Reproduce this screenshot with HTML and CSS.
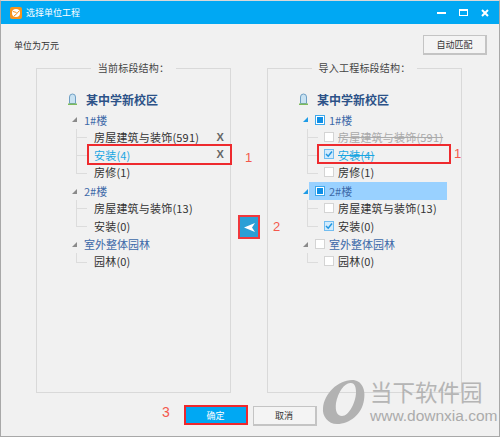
FILE: index.html
```html
<!DOCTYPE html>
<html lang="zh-CN">
<head>
    <meta charset="UTF-8">
    <title>选择单位工程</title>
    <link rel="stylesheet" href="styles.css">
</head>
<body>

<div class="window">
    <header class="titlebar">
        <svg class="logo" viewBox="0 0 12 12" width="12" height="12">
            <rect width="12" height="12" rx="2" fill="#f7941d"/>
            <circle cx="6" cy="6" r="4" fill="#fff"/>
            <path d="M3 4.5L6.5 5.5M9 4L6 7.5M4 9L6.5 7" fill="none" stroke="#f7941d" stroke-width="1"/>
        </svg>
        <span class="title">选择单位工程</span>
        <div class="controls">
            <svg width="9" height="2" viewBox="0 0 9 2"><rect width="9" height="2" fill="#fff"/></svg>
            <svg width="9" height="7" viewBox="0 0 9 7"><path d="M0 0H9V7H0Z M1 2V6H8V2Z" fill="#fff" fill-rule="evenodd"/></svg>
            <svg width="8" height="8" viewBox="0 0 8 8"><path d="M1 1L7 7M7 1L1 7" stroke="#fff" stroke-width="2"/></svg>
        </div>
    </header>

    <div class="toolbar">
        <span class="unit">单位为万元</span>
        <button class="btn">自动匹配</button>
    </div>

    <div class="panels">
        <fieldset class="panel">
            <legend>当前标段结构：</legend>
            <div class="tree tree-left">
                <div class="root">
                    <svg class="root-icon" viewBox="0 0 11 12" width="11" height="12">
                        <path d="M2.5 10.5V4A3 3 0 0 1 8.5 4V10.5Z" fill="#c9e2f2" stroke="#6f9fc4"/>
                        <rect x="1" y="10.5" width="9" height="1.5" fill="#7dbb5c"/>
                    </svg>
                    <span>某中学新校区</span>
                </div>
                <ul class="groups">
                    <li>
                        <div class="group"><i class="arrow"></i><span>1#楼</span></div>
                        <ul class="items">
                            <li><span>房屋建筑与装饰(591)</span><b class="del">X</b></li>
                            <li class="current"><span>安装(4)</span><b class="del">X</b></li>
                            <li><span>房修(1)</span></li>
                        </ul>
                    </li>
                    <li>
                        <div class="group"><i class="arrow"></i><span>2#楼</span></div>
                        <ul class="items">
                            <li><span>房屋建筑与装饰(13)</span></li>
                            <li><span>安装(0)</span></li>
                        </ul>
                    </li>
                    <li>
                        <div class="group"><i class="arrow"></i><span>室外整体园林</span></div>
                        <ul class="items">
                            <li><span>园林(0)</span></li>
                        </ul>
                    </li>
                </ul>
            </div>
        </fieldset>

        <button class="move">
            <svg width="11" height="9" viewBox="0 0 11 9"><path d="M0 4.5L11 0L8 4.5L11 9Z" fill="#fff"/></svg>
        </button>

        <fieldset class="panel">
            <legend>导入工程标段结构：</legend>
            <div class="tree tree-right">
                <div class="root">
                    <svg class="root-icon" viewBox="0 0 11 12" width="11" height="12">
                        <path d="M2.5 10.5V4A3 3 0 0 1 8.5 4V10.5Z" fill="#c9e2f2" stroke="#6f9fc4"/>
                        <rect x="1" y="10.5" width="9" height="1.5" fill="#7dbb5c"/>
                    </svg>
                    <span>某中学新校区</span>
                </div>
                <ul class="groups">
                    <li>
                        <div class="group"><i class="arrow arrow-on"></i><div class="group-body"><i class="check partial"></i><span>1#楼</span></div></div>
                        <ul class="items">
                            <li class="gone"><i class="check"></i><span>房屋建筑与装饰(591)</span></li>
                            <li class="current gone-blue"><i class="check on"><svg width="8" height="8" viewBox="0 0 8 8"><path d="M1 4L3.2 6.2L7 1.5" fill="none" stroke="#2196e0" stroke-width="1.5"/></svg></i><span>安装(4)</span></li>
                            <li><i class="check"></i><span>房修(1)</span></li>
                        </ul>
                    </li>
                    <li>
                        <div class="group"><i class="arrow arrow-on"></i><div class="group-body selected"><i class="check partial"></i><span>2#楼</span></div></div>
                        <ul class="items">
                            <li><i class="check"></i><span>房屋建筑与装饰(13)</span></li>
                            <li><i class="check on"><svg width="8" height="8" viewBox="0 0 8 8"><path d="M1 4L3.2 6.2L7 1.5" fill="none" stroke="#2196e0" stroke-width="1.5"/></svg></i><span>安装(0)</span></li>
                        </ul>
                    </li>
                    <li>
                        <div class="group"><i class="arrow"></i><div class="group-body"><i class="check"></i><span>室外整体园林</span></div></div>
                        <ul class="items">
                            <li><i class="check"></i><span>园林(0)</span></li>
                        </ul>
                    </li>
                </ul>
            </div>
        </fieldset>
    </div>

    <footer class="footer">
        <button class="btn btn-ok">确定</button>
        <button class="btn btn-cancel">取消</button>
    </footer>

    <!-- red notes drawn over the window -->
    <div class="mark mark-left"></div>
    <div class="mark mark-right"></div>
    <span class="note note-1a">1</span>
    <span class="note note-1b">1</span>
    <span class="note note-2">2</span>
    <span class="note note-3">3</span>

    <div class="watermark">
        <svg class="wm-logo" width="44" height="46" viewBox="0 0 44 46">
            <path d="M30 2C40 2 44 12 42 22C40 36 28 46 15 46C6 46 0 38 1 30C2 16 16 2 30 2ZM29 5C23 4 16 14 14 25C13 33 15 38 20 38C27 38 34 24 34 14C34 8 32 5 29 5Z" fill="#b2b2b2" fill-rule="evenodd"/>
        </svg>
        <div class="wm-text">
            <div class="wm-name">当下软件园</div>
            <div class="wm-url">www.downxia.com</div>
        </div>
    </div>
</div>

</body>
</html>
```

FILE: styles.css
```css
* {
    margin: 0;
    padding: 0;
    box-sizing: border-box;
}

body {
    font-family: "Noto Sans CJK SC", "Liberation Sans", sans-serif;
    font-size: 11px;
    color: #333;
    background: #f1f1f1;
}

ul {
    list-style: none;
}

i {
    font-style: normal;
}

.window {
    position: relative;
    display: flex;
    flex-direction: column;
    width: 500px;
    height: 437px;
    background: #f1f1f1;
    border: 1px solid #a8a8a8;
    border-top-color: #d8d8d8;
    overflow: hidden;
}

.titlebar {
    display: flex;
    align-items: center;
    flex: none;
    height: 23px;
    padding-left: 9px;
    background: #00a8f3;
    color: #fff;
}

.logo {
    margin-right: 4px;
}

.title {
    font-size: 9px;
}

.controls {
    display: flex;
    align-items: center;
    gap: 13px;
    margin-left: auto;
    margin-right: 10px;
}

.toolbar {
    display: flex;
    align-items: center;
    justify-content: space-between;
    flex: none;
    height: 37px;
    padding: 9px 12px 4px 13px;
}

.unit {
    font-size: 9px;
}

.btn {
    width: 64px;
    height: 20px;
    font-family: inherit;
    font-size: 9px;
    color: #333;
    background: #f4f4f4;
    border: 2px solid #c4c4c4;
    border-top-width: 1px;
    border-left-width: 1px;
}

.panels {
    display: grid;
    grid-template-columns: 195px 36px 195px;
    align-items: stretch;
    flex: 1;
    min-height: 0;
    padding-left: 35px;
}

.panel {
    min-width: 0;
    border: 1px solid #d9d9d9;
}

.panel legend {
    margin: 0 auto;
    padding: 0 7px;
    height: 14px;
    line-height: 14px;
    font-size: 10px;
    letter-spacing: 0.2px;
    color: #444;
}

.tree {
    padding-top: 14px;
    padding-left: 30px;
}

.tree-left {
    padding-right: 5px;
}

.tree-right {
    padding-right: 14px;
}

.root {
    display: flex;
    align-items: center;
    gap: 8px;
    height: 20px;
    margin-bottom: 2px;
    font-size: 12px;
    font-weight: bold;
    color: #2c5288;
}

.group {
    display: flex;
    align-items: center;
    height: 17.8px;
    padding-left: 5px;
    color: #3d69a8;
}

.arrow {
    width: 0;
    height: 0;
    margin-right: 7px;
    border-bottom: 5px solid #8a8a8a;
    border-left: 5px solid transparent;
}

.arrow-on {
    margin-right: 1px;
    border-bottom-color: #1e9be6;
}

.tree-right .arrow:not(.arrow-on) {
    margin-right: 1px;
}

.group-body {
    display: flex;
    align-items: center;
    flex: 1;
    height: 100%;
    padding-left: 6px;
    gap: 4px;
}

.selected {
    background: #99d1ff;
}

.items {
    margin-left: 9px;
}

.items li {
    display: flex;
    align-items: center;
    gap: 4px;
    height: 17.8px;
    padding-left: 18px;
    padding-bottom: 2px;
    letter-spacing: 0.2px;
    background:
        linear-gradient(#dcdcdc, #dcdcdc) 0 0 / 1px 100% no-repeat,
        linear-gradient(#dcdcdc, #dcdcdc) 0 50% / 11px 1px no-repeat;
}

.tree-right .items li {
    padding-left: 17px;
}

.items li:last-child {
    background:
        linear-gradient(#dcdcdc, #dcdcdc) 0 0 / 1px 50% no-repeat,
        linear-gradient(#dcdcdc, #dcdcdc) 0 50% / 11px 1px no-repeat;
}

.current {
    color: #19a6e2;
}

.gone span {
    color: #aaa;
    text-decoration: line-through;
}

.gone-blue span {
    text-decoration: line-through;
}

.del {
    margin-left: auto;
    margin-right: 1px;
    color: #666;
    font-family: "Liberation Sans", sans-serif;
    font-size: 11px;
}

.check {
    display: flex;
    align-items: center;
    justify-content: center;
    flex: none;
    width: 10px;
    height: 10px;
    background: #fff;
    border: 1px solid #d4d4d4;
}

.check.partial {
    border-color: #3fa9ec;
    background: linear-gradient(#0f8fe6, #0f8fe6) center / 6px 6px no-repeat #fff;
}

.check.on {
    border-color: #72bdf0;
    background: #d2ebfc;
}

.move {
    display: flex;
    align-items: center;
    justify-content: center;
    align-self: center;
    justify-self: center;
    width: 22px;
    height: 24px;
    background: #2a9fd6;
    border: 2px solid #f0383d;
}

.footer {
    display: flex;
    justify-content: center;
    gap: 5px;
    flex: none;
    height: 43px;
    padding-top: 12px;
}

.btn-ok {
    color: #fff;
    background: #00a8f3;
    border: 2px solid #f0282d;
}

.btn-cancel {
    margin-top: 1px;
}

.mark {
    position: absolute;
    border: 2px solid #ee2a2e;
}

.mark-left {
    left: 86px;
    top: 143px;
    width: 145px;
    height: 21px;
}

.mark-right {
    left: 316px;
    top: 143px;
    width: 134px;
    height: 20px;
}

.note {
    position: absolute;
    font-family: "Liberation Sans", sans-serif;
    font-size: 13px;
    line-height: 14px;
    color: #f4584c;
}

.note-1a { left: 244px; top: 150px; }
.note-1b { left: 453px; top: 146px; }
.note-2 { left: 272px; top: 219px; }
.note-3 { left: 161px; top: 404px; font-size: 14px; }

.watermark {
    position: absolute;
    left: 321px;
    top: 377px;
    display: flex;
    gap: 4px;
    color: #ababab;
}

.wm-text {
    padding-top: 3px;
}

.wm-name {
    font-family: "Liberation Sans", "Noto Sans CJK SC", sans-serif;
    font-size: 22.5px;
    line-height: 26px;
    margin-bottom: 1px;
    opacity: 0.85;
}

.wm-url {
    font-family: "Liberation Sans", sans-serif;
    font-size: 15.5px;
    line-height: 16px;
}
```
